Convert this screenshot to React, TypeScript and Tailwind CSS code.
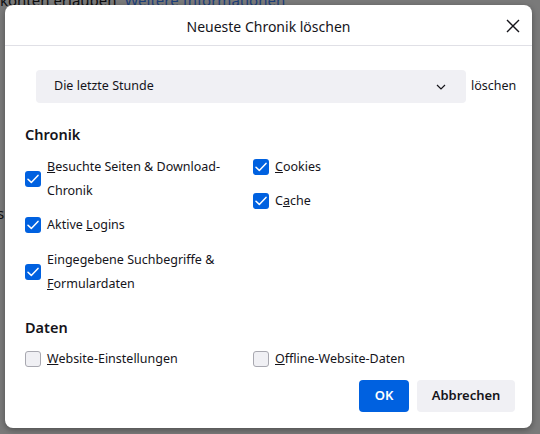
import React from "react";

const font = { fontFamily: '"Noto Sans", "Open Sans", sans-serif' };

function Check({ checked }: { checked: boolean }) {
  if (checked) {
    return (
      <span className="flex h-[16px] w-[16px] shrink-0 items-center justify-center rounded-[3px] bg-[#0061e0]">
        <svg width="12" height="10" viewBox="0 0 12 10" fill="none">
          <path d="M1 5.2 L4.3 8.4 L11 1.4" stroke="white" strokeWidth="1.5" strokeLinecap="round" strokeLinejoin="round" />
        </svg>
      </span>
    );
  }
  return <span className="h-[16px] w-[16px] shrink-0 rounded-[3px] border border-[#a8a8b0] bg-[#f0f0f4]" />;
}

function Item({ checked, children, className = "" }: { checked: boolean; children: React.ReactNode; className?: string }) {
  return (
    <div className={"flex items-center gap-[6px] " + className}>
      <Check checked={checked} />
      <span className="text-[12.5px] leading-[24px] text-[#15141a]">{children}</span>
    </div>
  );
}

export default function App() {
  return (
    <div className="relative h-[434px] w-[540px] overflow-hidden bg-[#7a7a7a]" style={font}>
      <div className="absolute left-0 top-[-11px] whitespace-nowrap text-[15px] text-[#0e0e10]">
        konten erlauben <span className="ml-[4px] text-[#1d3f7a]">Weitere Informationen</span>
      </div>
      <div className="absolute left-[-3px] top-[202px] text-[15px] text-[#0e0e10]">s</div>

      <div className="absolute left-[5px] top-[5px] flex h-[423px] w-[527px] flex-col rounded-[8px] bg-white shadow-[0_2px_6px_rgba(0,0,0,0.35)]">
        <div className="relative flex h-[41px] shrink-0 items-center justify-center border-b border-[#e0e0e6] pt-[2px]">
          <span className="text-[14px] text-[#15141a]">Neueste Chronik löschen</span>
          <svg className="absolute right-[12px] top-[14px]" width="14" height="14" viewBox="0 0 14 14">
            <path d="M1 1 L13 13 M13 1 L1 13" stroke="#15141a" strokeWidth="1.4" />
          </svg>
        </div>

        <div className="flex flex-1 flex-col px-[20px] pt-[24px] pb-[16px]">
          <div className="flex items-center pl-[11px]">
            <div className="flex h-[33px] w-[430px] shrink-0 items-center justify-between rounded-[4px] bg-[#f0f0f4] pl-[18px] pr-[20px]">
              <span className="text-[12.5px] text-[#15141a]">Die letzte Stunde</span>
              <svg width="10" height="6" viewBox="0 0 10 6" fill="none">
                <path d="M1 1 L5 5 L9 1" stroke="#15141a" strokeWidth="1.2" />
              </svg>
            </div>
            <span className="ml-[5px] whitespace-nowrap text-[12.5px] text-[#15141a]">löschen</span>
          </div>

          <div className="mt-[21px] text-[14.5px] font-semibold leading-[20px] text-[#15141a]">Chronik</div>

          <div className="mt-[11px] flex">
            <div className="flex w-[228px] flex-col gap-[10px]">
              <Item checked>
                <u>B</u>esuchte Seiten &amp; Download-
                <br />
                Chronik
              </Item>
              <Item checked>
                Aktive <u>L</u>ogins
              </Item>
              <Item checked className="mt-[1px]">
                Eingegebene Suchbegriffe &amp;
                <br />
                <u>F</u>ormulardaten
              </Item>
            </div>
            <div className="flex flex-col gap-[10px]">
              <Item checked>
                <u>C</u>ookies
              </Item>
              <Item checked>
                C<u>a</u>che
              </Item>
            </div>
          </div>

          <div className="mt-[21px] text-[14.5px] font-semibold leading-[20px] text-[#15141a]">Daten</div>

          <div className="mt-[10px] flex">
            <Item checked={false} className="w-[228px]">
              <u>W</u>ebsite-Einstellungen
            </Item>
            <Item checked={false}>
              <u>O</u>ffline-Website-Daten
            </Item>
          </div>

          <div className="mt-auto flex justify-end gap-[8px]">
            <button className="h-[32px] w-[50px] rounded-[4px] bg-[#0061e0] text-[13px] font-semibold text-white">OK</button>
            <button className="mr-[-3px] h-[32px] w-[98px] rounded-[4px] bg-[#f0f0f4] text-[13px] font-semibold text-[#15141a]">Abbrechen</button>
          </div>
        </div>
      </div>
    </div>
  );
}
